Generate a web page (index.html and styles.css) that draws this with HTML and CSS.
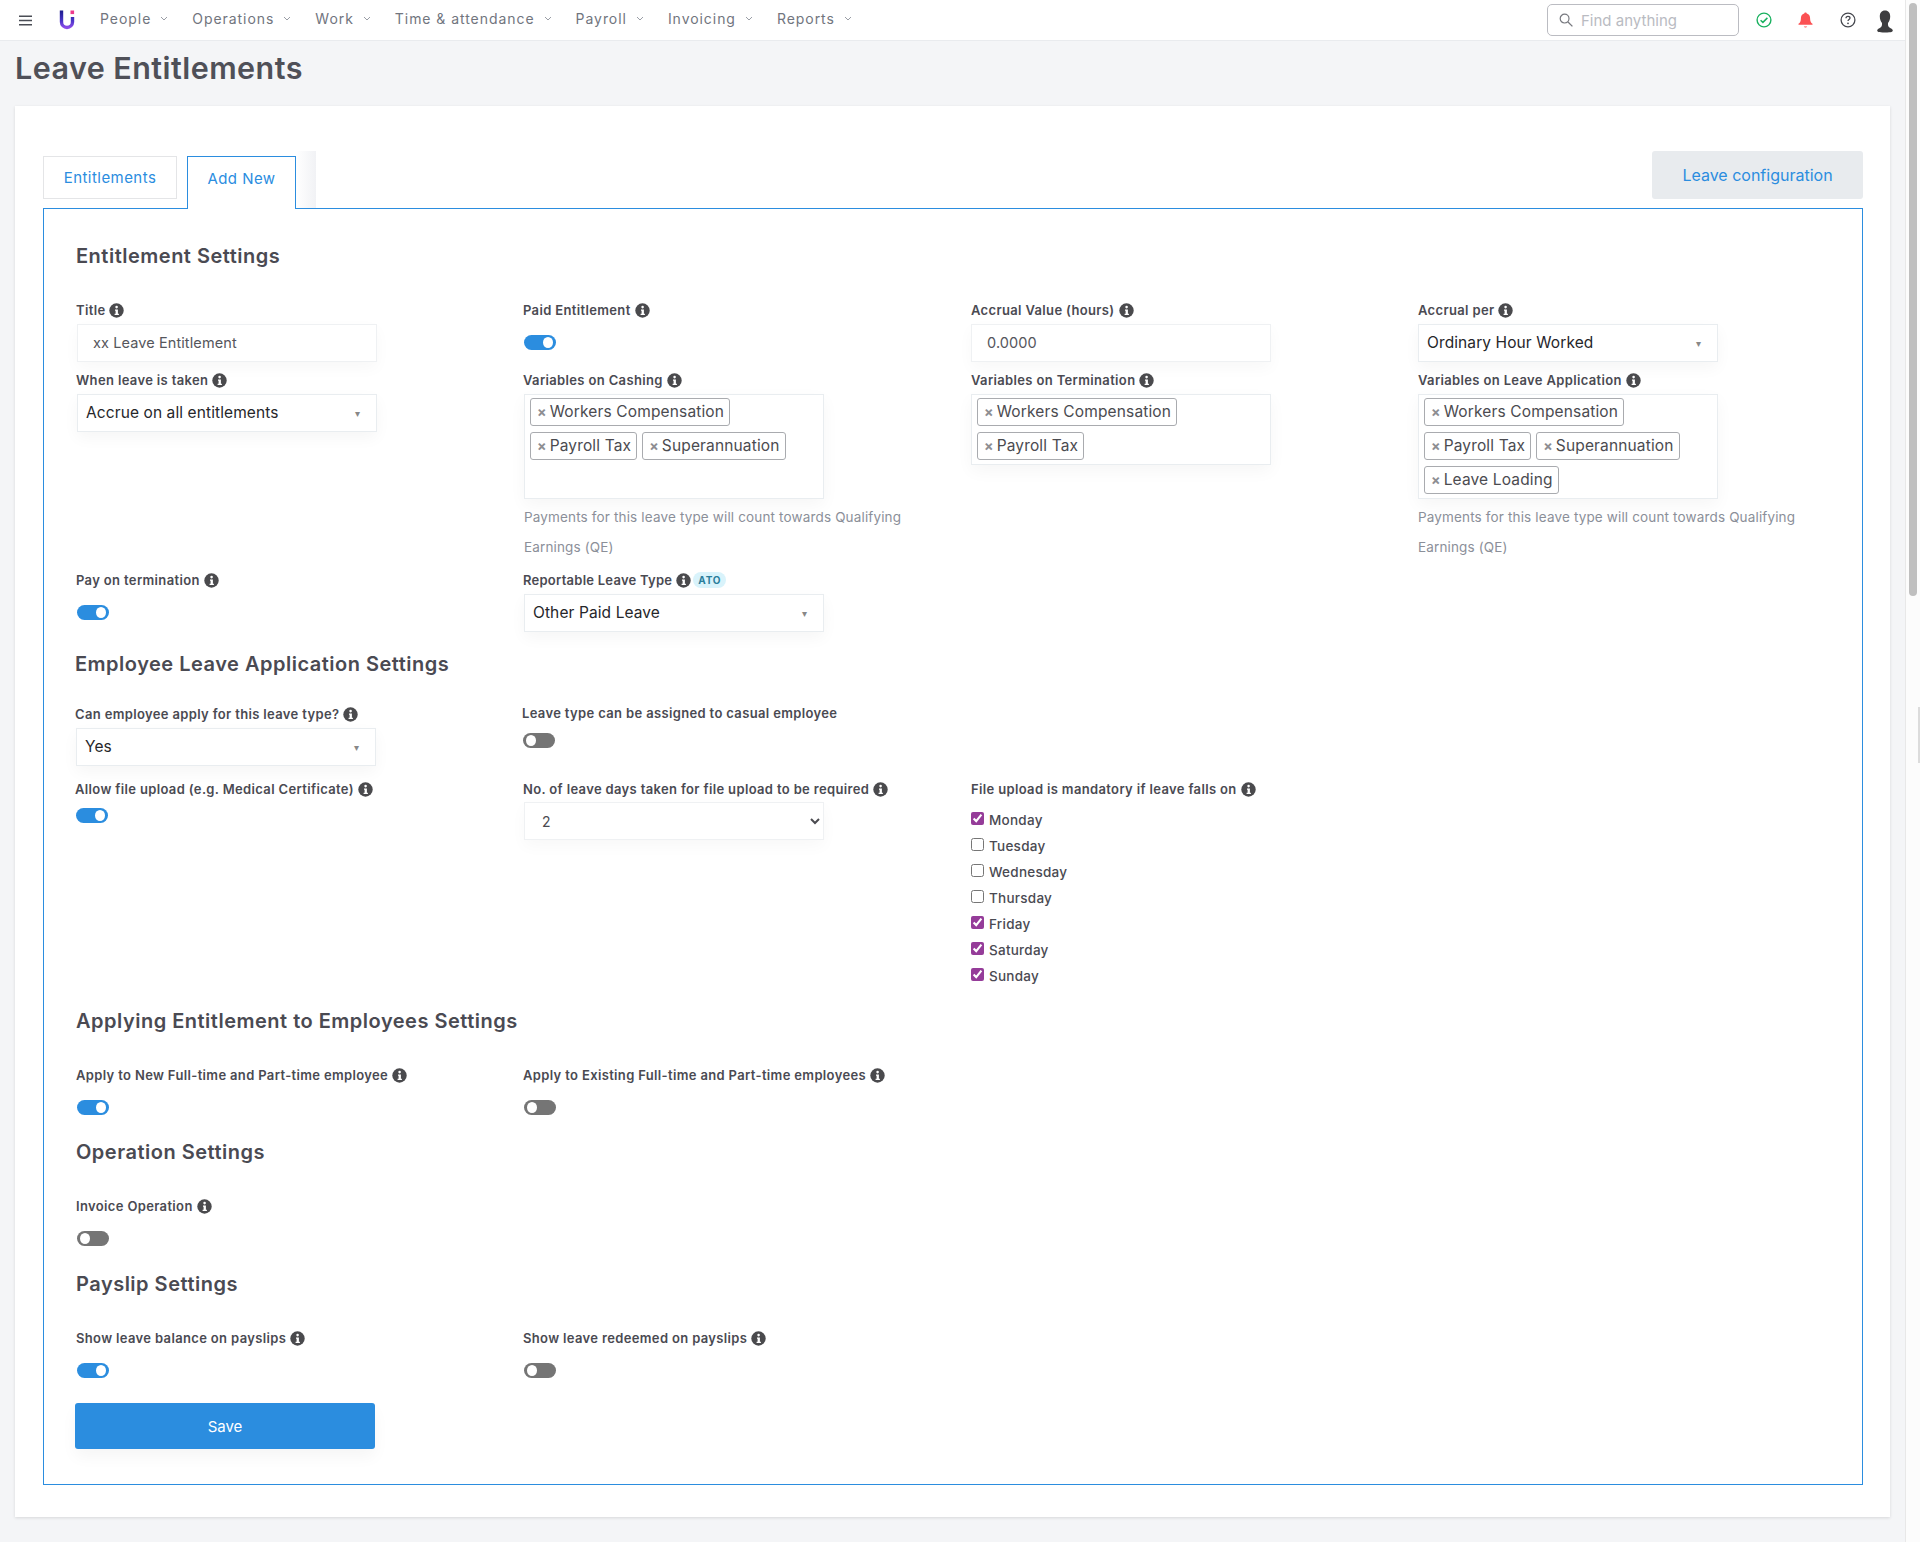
FILE: index.html
```html
<!DOCTYPE html>
<html>
<head>
    <meta name="viewport" content="width=device-width, initial-scale=1.0">
    <link rel="stylesheet" href="styles.css">
</head>
<body>

<svg class="sprites" width="0" height="0">
    <symbol id="info" viewBox="0 0 15 15">
        <circle cx="7.5" cy="7.5" r="7.2" fill="#4a4a4d"/>
        <circle cx="7.6" cy="4.1" r="1.3" fill="#fff"/>
        <path d="M6 6.4h2.9v4.4h1v1.3H5.6v-1.3h1V7.7H6z" fill="#fff"/>
    </symbol>
    <symbol id="chevron" viewBox="0 0 8 5">
        <path d="M1 1l3 3 3-3" fill="none" stroke="#9a9ea6" stroke-width="1"/>
    </symbol>
</svg>

<div class="shell">
    <div class="page">
        <div class="navbar">
            <svg class="burger" width="13" height="11" viewBox="0 0 13 11">
                <path d="M0 1.2h13M0 5.5h13M0 9.8h13" stroke="#4a4d55" stroke-width="1.6"/>
            </svg>
            <svg class="logo" width="16" height="20" viewBox="0 0 16 20">
                <defs>
                    <linearGradient id="logoGrad" x1="0" y1="0" x2="0" y2="1">
                        <stop offset="0" stop-color="#1a1a8c"/>
                        <stop offset="0.6" stop-color="#4a35c8"/>
                        <stop offset="1" stop-color="#8a4be8"/>
                    </linearGradient>
                </defs>
                <path d="M2.5 0.5v11.5a5.500 5.500 0 0 0 11 0V7" fill="none" stroke="url(#logoGrad)" stroke-width="3.4"/>
                <rect x="11.500" y="0.5" width="3.6" height="3.6" fill="#ee3a8c"/>
            </svg>
            <div class="nav-links">
                <a class="nav-link" href="#">People<svg class="nav-chevron"><use href="#chevron"/></svg></a>
                <a class="nav-link" href="#">Operations<svg class="nav-chevron"><use href="#chevron"/></svg></a>
                <a class="nav-link" href="#">Work<svg class="nav-chevron"><use href="#chevron"/></svg></a>
                <a class="nav-link" href="#">Time &amp; attendance<svg class="nav-chevron"><use href="#chevron"/></svg></a>
                <a class="nav-link" href="#">Payroll<svg class="nav-chevron"><use href="#chevron"/></svg></a>
                <a class="nav-link" href="#">Invoicing<svg class="nav-chevron"><use href="#chevron"/></svg></a>
                <a class="nav-link" href="#">Reports<svg class="nav-chevron"><use href="#chevron"/></svg></a>
            </div>
            <div class="nav-right">
                <div class="find-box">
                    <svg width="14" height="14" viewBox="0 0 14 14">
                        <circle cx="5.6" cy="5.6" r="4.4" fill="none" stroke="#77797f" stroke-width="1.2"/>
                        <path d="M9 9l4.400 4.400" stroke="#77797f" stroke-width="1.3"/>
                    </svg>
                    <span>Find anything</span>
                </div>
                <svg class="nav-icon-check" width="16" height="16" viewBox="0 0 16 16">
                    <circle cx="8" cy="8" r="6.9" fill="none" stroke="#19b15f" stroke-width="1.4"/>
                    <path d="M4.600 8.300l2.300 2.100 4.500-4.500" fill="none" stroke="#19b15f" stroke-width="1.5"/>
                </svg>
                <svg class="nav-icon-bell" width="15" height="16" viewBox="0 0 15 16">
                    <path d="M7.500 0.4c.8 0 1.200.5 1.300 1.200 2.300.6 3.300 2.500 3.300 4.800 0 2.800.8 4.200 2.400 5.400v1H.5v-1c1.600-1.200 2.400-2.600 2.400-5.400 0-2.300 1-4.200 3.300-4.800.1-.7.5-1.200 1.300-1.200z" fill="#fb5153"/>
                    <path d="M5.800 14.600h3.400c-.3.6-.9 1-1.700 1s-1.400-.4-1.700-1z" fill="#fb5153"/>
                </svg>
                <svg class="nav-icon-help" width="16" height="16" viewBox="0 0 16 16">
                    <circle cx="8" cy="8" r="6.9" fill="none" stroke="#45474e" stroke-width="1.3"/>
                    <path d="M6 6.300c0-1.200.9-1.900 2-1.900s2 .7 2 1.700c0 1.500-2 1.500-2 3" fill="none" stroke="#45474e" stroke-width="1.3"/>
                    <circle cx="8" cy="11.3" r="0.9" fill="#45474e"/>
                </svg>
                <svg class="nav-icon-user" width="16" height="23" viewBox="0 0 16 23">
                    <path d="M8 .5C11.500 .5 13.200 3 13.200 6.500C13.200 9.500 12.200 11.500 11 13C10.800 15 11.200 16.500 12.500 17.500C14 18.500 15.600 19 15.800 20.500C15.900 21.500 15 22.500 8 22.500C1 22.500 .1 21.500 .2 20.500C.4 19 2 18.500 3.500 17.500C4.800 16.500 5.200 15 5 13C3.800 11.500 2.800 9.500 2.800 6.500C2.800 3 4.500 .5 8 .5z" fill="#3d3d3f"/>
                </svg>
            </div>
        </div>

        <h1 class="page-title">Leave Entitlements</h1>

        <div class="card">
            <div class="tabs-row">
                <div class="tabs">
                    <a class="tab" href="#">Entitlements</a>
                    <a class="tab tab-active" href="#">Add New</a>
                    <div class="tabs-fade"></div>
                </div>
                <a class="config-btn" href="#">Leave configuration</a>
            </div>

            <div class="tab-content">
                <h3 class="section-title">Entitlement Settings</h3>
                <div class="row">
                    <div class="field">
                        <label class="field-label">Title <svg class="info"><use href="#info"/></svg></label>
                        <input class="text-input" type="text" value="xx Leave Entitlement" readonly>
                    </div>
                    <div class="field">
                        <label class="field-label">Paid Entitlement <svg class="info"><use href="#info"/></svg></label>
                        <div class="toggle toggle-on"></div>
                    </div>
                    <div class="field">
                        <label class="field-label">Accrual Value (hours) <svg class="info"><use href="#info"/></svg></label>
                        <input class="text-input" type="text" value="0.0000" readonly>
                    </div>
                    <div class="field">
                        <label class="field-label">Accrual per <svg class="info"><use href="#info"/></svg></label>
                        <div class="dropdown">Ordinary Hour Worked<span class="caret">&#9662;</span></div>
                    </div>
                </div>

                <div class="row row-second">
                    <div class="field">
                        <label class="field-label">When leave is taken <svg class="info"><use href="#info"/></svg></label>
                        <div class="dropdown">Accrue on all entitlements<span class="caret">&#9662;</span></div>
                    </div>
                    <div class="field">
                        <label class="field-label">Variables on Cashing <svg class="info"><use href="#info"/></svg></label>
                        <div class="multi multi-tall">
                            <span class="tag"><i>&times;</i>Workers Compensation</span>
                            <span class="tag"><i>&times;</i>Payroll Tax</span>
                            <span class="tag"><i>&times;</i>Superannuation</span>
                        </div>
                        <p class="help-text">Payments for this leave type will count towards Qualifying Earnings (QE)</p>
                    </div>
                    <div class="field">
                        <label class="field-label">Variables on Termination <svg class="info"><use href="#info"/></svg></label>
                        <div class="multi">
                            <span class="tag"><i>&times;</i>Workers Compensation</span>
                            <span class="tag"><i>&times;</i>Payroll Tax</span>
                        </div>
                    </div>
                    <div class="field">
                        <label class="field-label">Variables on Leave Application <svg class="info"><use href="#info"/></svg></label>
                        <div class="multi multi-tall">
                            <span class="tag"><i>&times;</i>Workers Compensation</span>
                            <span class="tag"><i>&times;</i>Payroll Tax</span>
                            <span class="tag"><i>&times;</i>Superannuation</span>
                            <span class="tag"><i>&times;</i>Leave Loading</span>
                        </div>
                        <p class="help-text">Payments for this leave type will count towards Qualifying Earnings (QE)</p>
                    </div>
                </div>

                <div class="row row-third">
                    <div class="field">
                        <label class="field-label">Pay on termination <svg class="info"><use href="#info"/></svg></label>
                        <div class="toggle toggle-on"></div>
                    </div>
                    <div class="field">
                        <label class="field-label label-report">Reportable Leave Type <svg class="info"><use href="#info"/></svg><span class="ato-badge">ATO</span></label>
                        <div class="dropdown">Other Paid Leave<span class="caret">&#9662;</span></div>
                    </div>
                </div>

                <h3 class="section-title section-employee">Employee Leave Application Settings</h3>
                <div class="row">
                    <div class="field field-shift">
                        <label class="field-label">Can employee apply for this leave type? <svg class="info"><use href="#info"/></svg></label>
                        <div class="dropdown">Yes<span class="caret">&#9662;</span></div>
                    </div>
                    <div class="field field-shift">
                        <label class="field-label label-up">Leave type can be assigned to casual employee</label>
                        <div class="toggle toggle-tight"></div>
                    </div>
                </div>

                <div class="row row-upload">
                    <div class="field field-shift">
                        <label class="field-label">Allow file upload (e.g. Medical Certificate) <svg class="info"><use href="#info"/></svg></label>
                        <div class="toggle toggle-on toggle-tight"></div>
                    </div>
                    <div class="field">
                        <label class="field-label">No. of leave days taken for file upload to be required <svg class="info"><use href="#info"/></svg></label>
                        <select class="native-select"><option>2</option></select>
                    </div>
                    <div class="field">
                        <label class="field-label">File upload is mandatory if leave falls on <svg class="info"><use href="#info"/></svg></label>
                        <div class="days">
                            <label class="day"><input type="checkbox" checked>Monday</label>
                            <label class="day"><input type="checkbox">Tuesday</label>
                            <label class="day"><input type="checkbox">Wednesday</label>
                            <label class="day"><input type="checkbox">Thursday</label>
                            <label class="day"><input type="checkbox" checked>Friday</label>
                            <label class="day"><input type="checkbox" checked>Saturday</label>
                            <label class="day"><input type="checkbox" checked>Sunday</label>
                        </div>
                    </div>
                </div>

                <h3 class="section-title section-applying">Applying Entitlement to Employees Settings</h3>
                <div class="row">
                    <div class="field">
                        <label class="field-label">Apply to New Full-time and Part-time employee <svg class="info"><use href="#info"/></svg></label>
                        <div class="toggle toggle-on"></div>
                    </div>
                    <div class="field">
                        <label class="field-label">Apply to Existing Full-time and Part-time employees <svg class="info"><use href="#info"/></svg></label>
                        <div class="toggle"></div>
                    </div>
                </div>

                <h3 class="section-title section-later">Operation Settings</h3>
                <div class="row">
                    <div class="field">
                        <label class="field-label">Invoice Operation <svg class="info"><use href="#info"/></svg></label>
                        <div class="toggle"></div>
                    </div>
                </div>

                <h3 class="section-title section-payslip">Payslip Settings</h3>
                <div class="row">
                    <div class="field">
                        <label class="field-label">Show leave balance on payslips <svg class="info"><use href="#info"/></svg></label>
                        <div class="toggle toggle-on"></div>
                    </div>
                    <div class="field">
                        <label class="field-label">Show leave redeemed on payslips <svg class="info"><use href="#info"/></svg></label>
                        <div class="toggle"></div>
                    </div>
                </div>

                <button class="save-btn" type="button">Save</button>
            </div>
        </div>
    </div>

    <div class="scrollbar">
        <div class="scrollbar-thumb"></div>
        <div class="edge-handle"></div>
    </div>
</div>

</body>
</html>
```

FILE: styles.css
```css
* {
    box-sizing: border-box;
}

html, body {
    margin: 0;
    padding: 0;
    height: 1542px;
    overflow: hidden;
}

body {
    font-family: Inter, "Noto Sans", Arial, sans-serif;
    background-color: #fff;
    color: #4a4a52;
}

.sprites {
    position: absolute;
}

.shell {
    display: flex;
    height: 1542px;
}

.page {
    width: 1906px;
    background-color: #f4f5f7;
    border-right: 1px solid #e8e8e8;
}

/* Top bar */
.navbar {
    display: flex;
    align-items: center;
    height: 41px;
    background-color: #fff;
    border-bottom: 1px solid #e9ebee;
    padding-left: 19px;
}

.logo {
    margin-left: 27px;
    margin-right: 25px;
}

.nav-links {
    display: flex;
    align-items: center;
    height: 38px;
    margin-top: -3px;
}

.nav-link {
    display: flex;
    align-items: center;
    font-size: 14px;
    letter-spacing: 0.95px;
    color: #71757e;
    text-decoration: none;
    margin-right: 24px;
}

.nav-chevron {
    width: 8px;
    height: 5px;
    margin-left: 9px;
}

.nav-right {
    display: flex;
    align-items: center;
    margin-left: auto;
}

.find-box {
    display: flex;
    align-items: center;
    width: 192px;
    height: 32px;
    border: 1px solid #bbbcc2;
    border-radius: 5px;
    padding-left: 11px;
    font-size: 15px;
    color: #b9bbc2;
    margin-right: 17px;
}

.find-box span {
    margin-left: 8px;
}

.nav-icon-check {
    margin-right: 26px;
}

.nav-icon-bell {
    margin-right: 27px;
}

.nav-icon-help {
    margin-right: 21px;
}

.nav-icon-user {
    margin-right: 12px;
    margin-top: 2px;
}

/* Title */
.page-title {
    margin: 0;
    padding: 9px 0 0 15px;
    height: 65px;
    font-size: 30.5px;
    line-height: 36px;
    letter-spacing: 0.45px;
    font-weight: 600;
    color: #4f5058;
}

/* Card */
.card {
    width: 1875px;
    margin-left: 15px;
    height: 1411px;
    background-color: #fff;
    padding: 45px 27px 32px 28px;
    box-shadow: 0 1px 3px rgba(0, 0, 0, 0.12);
}

.tabs-row {
    display: flex;
    justify-content: space-between;
    align-items: flex-start;
    height: 57px;
}

.tabs {
    display: flex;
    padding-top: 5px;
    position: relative;
    z-index: 1;
}

.tab {
    display: flex;
    align-items: center;
    justify-content: center;
    height: 43px;
    font-size: 15px;
    letter-spacing: 0.45px;
    color: #2b8ddf;
    text-decoration: none;
    background-color: #fff;
    border: 1px solid #e4e5e7;
}

.tab:first-child {
    width: 134px;
    margin-right: 10px;
}

.tab-active {
    width: 109px;
    height: 53px;
    padding-bottom: 10px;
    border: 1px solid #2b8ddf;
    border-bottom: none;
}

.tabs-fade {
    width: 20px;
    height: 57px;
    margin-top: -5px;
    background: linear-gradient(to right, #fff, #f1f2f5);
}

.config-btn {
    display: flex;
    align-items: center;
    justify-content: center;
    width: 211px;
    height: 48px;
    border-radius: 3px;
    background-color: #e8ebee;
    color: #2b8ddf;
    font-size: 16px;
    text-decoration: none;
}

.tab-content {
    height: 1277px;
    border: 1px solid #2b8ddf;
    padding: 32px 0 0 33px;
}

/* Sections */
.section-title {
    margin: 0 0 29px -1px;
    font-size: 20px;
    line-height: 30px;
    letter-spacing: 0.5px;
    font-weight: 600;
    color: #4a4a52;
}

.section-employee {
    margin: 17px 0 25px -2px;
}

.section-applying {
    margin-top: 17px;
}

.section-later {
    margin-top: 22px;
}

.section-payslip {
    margin-top: 23px;
}

.row {
    display: grid;
    grid-template-columns: repeat(4, 447px);
}

.row-second {
    margin-top: 8px;
}

.row-third {
    margin-top: 8px;
}

.row-upload {
    margin-top: 13px;
}

.field-shift {
    margin-left: -1px;
}

.field-label {
    display: flex;
    align-items: center;
    height: 20px;
    margin-bottom: 4px;
    font-size: 13px;
    letter-spacing: 0.35px;
    font-weight: 600;
    white-space: nowrap;
    color: #4a4a52;
}

.field:nth-child(-n+2) > .field-label {
    margin-left: -1px;
}

.label-up {
    position: relative;
    top: -1px;
}

.label-report {
    letter-spacing: 0.25px;
}

.info {
    width: 15px;
    height: 15px;
    margin-left: 4px;
    flex-shrink: 0;
}

.ato-badge {
    margin-left: 2px;
    padding: 0 5px;
    height: 16px;
    line-height: 16px;
    border-radius: 8px;
    background-color: #d9f3fb;
    color: #2b7e9b;
    font-size: 10px;
    font-weight: 700;
    letter-spacing: 0.8px;
}

/* Controls */
.text-input {
    display: block;
    width: 300px;
    height: 38px;
    padding: 0 15px 2px;
    font-family: inherit;
    font-size: 14.5px;
    letter-spacing: 0.1px;
    color: #55565c;
    background-color: #fff;
    border: 1px solid #eff1f3;
    box-shadow: 0 6px 16px rgba(0, 0, 0, 0.03);
    outline: none;
}

.dropdown {
    display: flex;
    align-items: center;
    justify-content: space-between;
    width: 300px;
    height: 38px;
    padding: 0 16px 1px 8px;
    font-size: 15.5px;
    letter-spacing: 0.1px;
    color: #26262a;
    background-color: #fff;
    border: 1px solid #e9edf0;
    box-shadow: 0 6px 16px rgba(0, 0, 0, 0.04);
}

.caret {
    font-size: 10px;
    color: #888;
}

.multi {
    display: flex;
    flex-wrap: wrap;
    align-content: flex-start;
    gap: 6px 5px;
    width: 300px;
    min-height: 71px;
    padding: 3px 5px 0;
    border: 1px solid #e9edf0;
    box-shadow: 0 6px 16px rgba(0, 0, 0, 0.04);
}

.multi-tall {
    height: 105px;
}

.tag {
    display: flex;
    align-items: center;
    height: 28px;
    padding: 0 5px 2px 6px;
    font-size: 15.5px;
    letter-spacing: 0.15px;
    color: #4b4b50;
    border: 1px solid #a9abaf;
    border-radius: 3px;
}

.tag i {
    font-style: normal;
    font-size: 14px;
    font-weight: 700;
    color: #8e8e92;
    margin-right: 3px;
}

.help-text {
    margin: 3px 0 0;
    width: 400px;
    font-size: 13.5px;
    line-height: 30px;
    letter-spacing: 0.15px;
    color: #8b8f99;
}

.toggle {
    position: relative;
    width: 32px;
    height: 15px;
    margin-top: 15px;
    border-radius: 8px;
    background-color: #757575;
}

.toggle::after {
    content: "";
    position: absolute;
    top: 2px;
    left: 3px;
    width: 10px;
    height: 11px;
    border-radius: 50%;
    background-color: #fff;
}

.toggle-on {
    background-color: #2b8ddf;
}

.toggle-on::after {
    left: auto;
    right: 3px;
}

.toggle-tight {
    margin-top: 9px;
}

.native-select {
    display: block;
    width: 300px;
    height: 38px;
    margin-top: -1px;
    padding-left: 13px;
    font-family: inherit;
    font-size: 14px;
    color: #4b4b50;
    background-color: #fff;
    border: 1px solid #eff1f3;
    box-shadow: 0 6px 16px rgba(0, 0, 0, 0.03);
    outline: none;
}

.days {
    margin-top: 8px;
}

.day {
    display: flex;
    align-items: center;
    height: 26px;
    font-size: 13.5px;
    font-weight: 500;
    letter-spacing: 0.25px;
    color: #4a4a52;
}

.day input {
    width: 13px;
    height: 13px;
    margin: 0 5px 0 0;
    accent-color: #953c99;
    position: relative;
    top: -2px;
}

.save-btn {
    display: block;
    width: 300px;
    height: 46px;
    margin-top: 25px;
    margin-left: -2px;
    border: none;
    border-radius: 3px;
    background-color: #2b8ddf;
    color: #fff;
    font-family: inherit;
    font-size: 15px;
    box-shadow: 0 8px 16px rgba(0, 0, 0, 0.04);
}

/* Drawn scrollbar, the shot was taken with one showing */
.scrollbar {
    position: relative;
    width: 14px;
    background-color: #fcfcfc;
    padding: 3px 3px 0 3px;
}

.scrollbar-thumb {
    width: 8px;
    height: 593px;
    border-radius: 4px;
    background-color: #bfbfbf;
}

.edge-handle {
    position: absolute;
    top: 707px;
    right: 0;
    width: 2px;
    height: 56px;
    background-color: #dcdcdc;
}
```
